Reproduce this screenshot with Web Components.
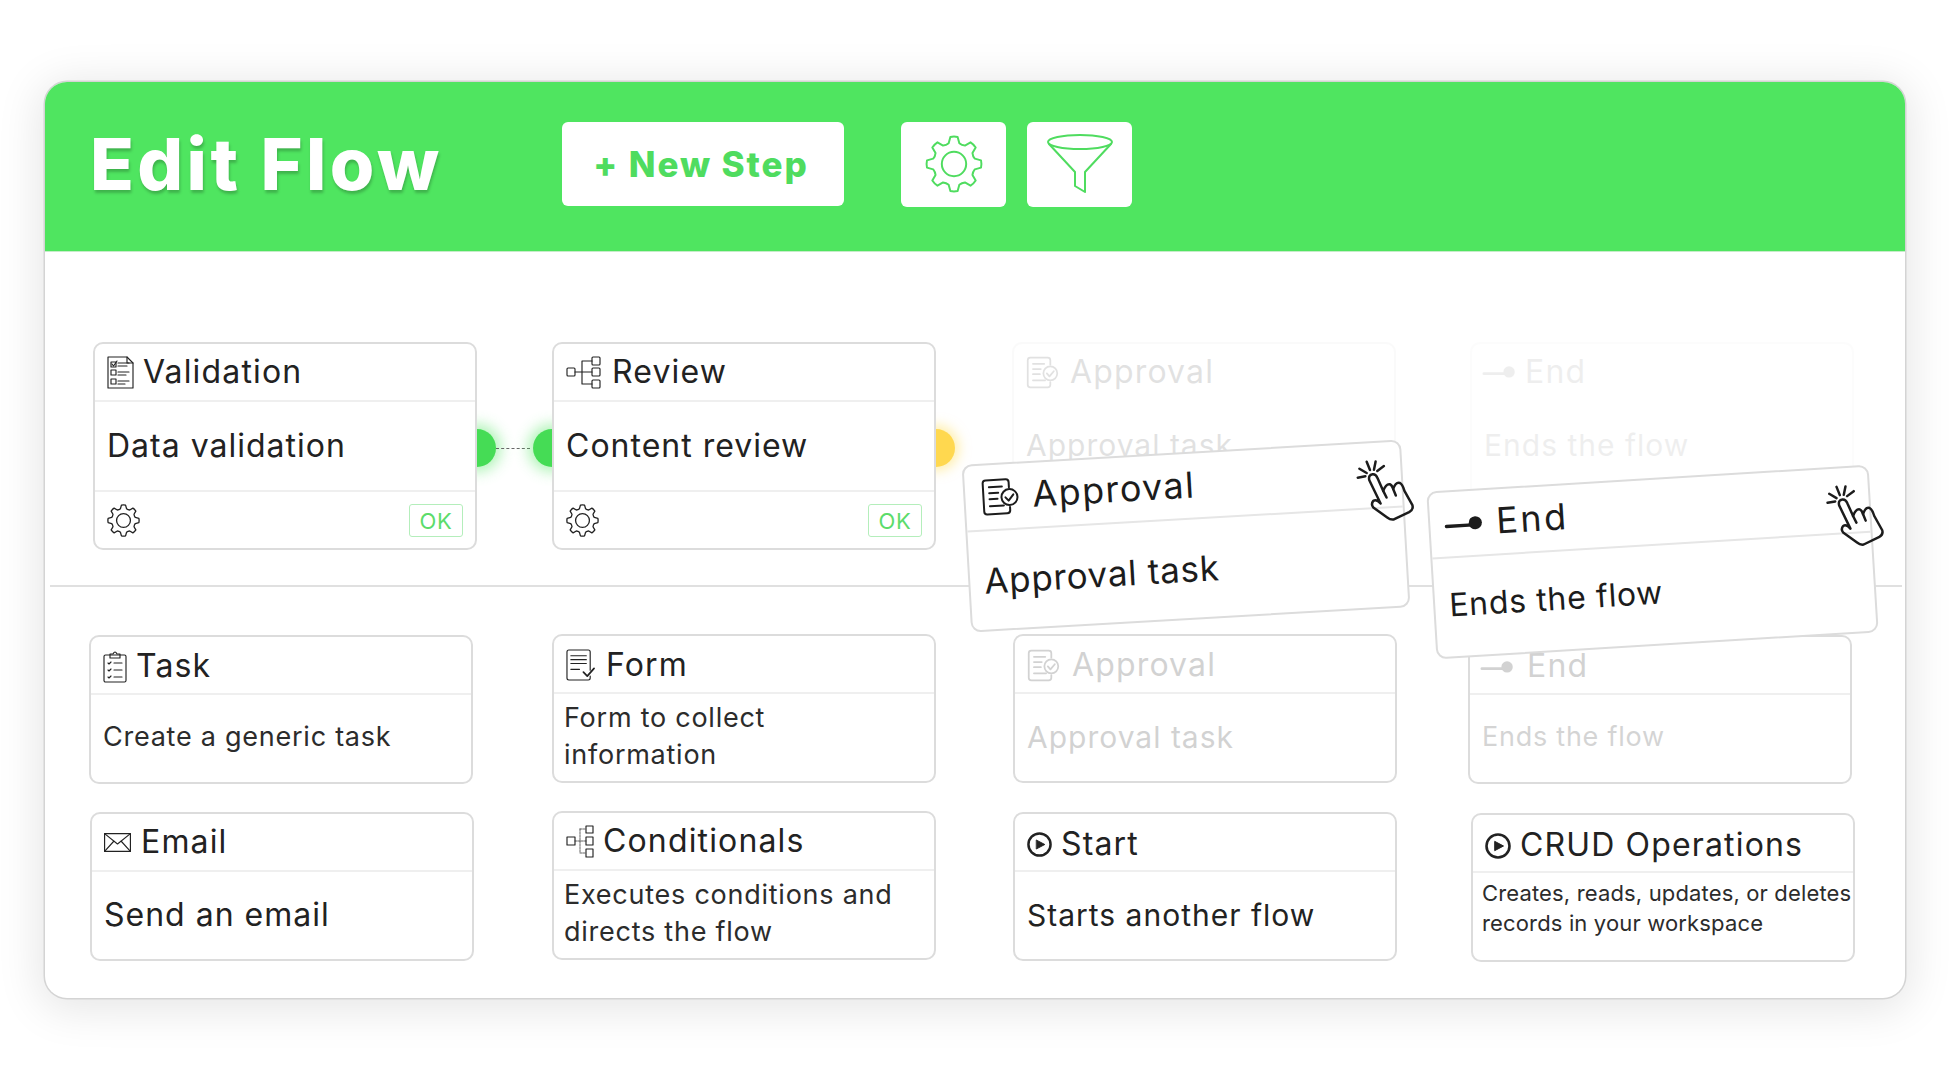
<!DOCTYPE html>
<html>
<head>
<meta charset="utf-8">
<title>Edit Flow</title>
<style>
html,body{margin:0;padding:0;background:#fff;}
body{font-family:Inter,"Liberation Sans",sans-serif;color:#222;width:1950px;height:1080px;overflow:hidden;}
</style>
</head>
<body>
<flow-window>
    <flow-header slot="header">
        <span slot="title">Edit Flow</span>
        <flow-button>+ New Step</flow-button>
        <flow-icon-button slot="tools"><flow-icon name="gear" width="58" weight="3.4"></flow-icon></flow-icon-button>
        <flow-icon-button slot="tools" style="margin-left:21px"><flow-icon name="funnel" width="68" weight="2"></flow-icon></flow-icon-button>
    </flow-header>

    <flow-row style="--left:48px;--cols:459px 460px 458px 384px">
        <flow-card tall>
            <flow-icon slot="icon" name="checklist" width="27"></flow-icon>
            <span slot="title">Validation</span>
            Data validation
            <flow-port slot="port" side="right" line></flow-port>
            <flow-icon slot="footer" name="gear" width="33" weight="4"></flow-icon>
            <flow-badge slot="footer">OK</flow-badge>
        </flow-card>
        <flow-card tall>
            <flow-icon slot="icon" name="branch" width="35"></flow-icon>
            <span slot="title" style="margin-left:2px">Review</span>
            Content review
            <flow-port slot="port" side="left"></flow-port>
            <flow-port slot="port" side="right" color="yellow"></flow-port>
            <flow-icon slot="footer" name="gear" width="33" weight="4"></flow-icon>
            <flow-badge slot="footer">OK</flow-badge>
        </flow-card>
        <flow-card tall faded size="m" style="opacity:.13">
            <flow-icon slot="icon" name="approval" width="33"></flow-icon>
            <span slot="title" style="margin-left:2px">Approval</span>
            Approval task
        </flow-card>
        <flow-card tall faded size="m" style="opacity:.07">
            <flow-icon slot="icon" name="end" width="32"></flow-icon>
            <span slot="title">End</span>
            Ends the flow
        </flow-card>
    </flow-row>

    <flow-divider></flow-divider>

    <flow-row style="--left:44px;--cols:463px 461px 455px 384px;--top:47px;--title-shift:2px">
        <flow-card size="s" style="margin-top:1px;--body-left:12px">
            <flow-icon slot="icon" name="clipboard" width="24"></flow-icon>
            <span slot="title">Task</span>
            Create a generic task
        </flow-card>
        <flow-card size="s">
            <flow-icon slot="icon" name="form" width="30"></flow-icon>
            <span slot="title" style="margin-left:1px">Form</span>
            Form to collect<br>information
        </flow-card>
        <flow-card size="m" ghost>
            <flow-icon slot="icon" name="approval" width="33"></flow-icon>
            <span slot="title" style="margin-left:3px">Approval</span>
            Approval task
        </flow-card>
        <flow-card size="s" ghost style="margin-top:1px;--title-shift:3px;--body-left:12px">
            <flow-icon slot="icon" name="end" width="32"></flow-icon>
            <span slot="title" style="margin-left:4px">End</span>
            Ends the flow
        </flow-card>
    </flow-row>

    <flow-row style="--left:45px;--cols:462px 461px 458px 384px;--top:27px">
        <flow-card style="margin-top:1px">
            <flow-icon slot="icon" name="mail" width="27"></flow-icon>
            <span slot="title" style="margin-left:1px">Email</span>
            Send an email
        </flow-card>
        <flow-card size="s">
            <flow-icon slot="icon" name="conditional" width="28"></flow-icon>
            <span slot="title">Conditionals</span>
            Executes conditions and<br>directs the flow
        </flow-card>
        <flow-card size="m" style="margin-top:1px;--title-shift:5px">
            <flow-icon slot="icon" name="play" width="25"></flow-icon>
            <span slot="title">Start</span>
            Starts another flow
        </flow-card>
        <flow-card size="xs" style="margin-top:2px;--title-shift:5px">
            <flow-icon slot="icon" name="play" width="26"></flow-icon>
            <span slot="title">CRUD Operations</span>
            Creates, reads, updates, or deletes<br>records in your workspace
        </flow-card>
    </flow-row>

    <flow-drag slot="float" style="left:921px;top:201px;width:440px;--tilt:-3.3deg;--body:35px;--hand:-13px">
        <flow-icon slot="icon" name="approval" width="38"></flow-icon>
        <span slot="title" style="letter-spacing:1.4px">Approval</span>
        Approval task
    </flow-drag>
    <flow-drag slot="float" style="left:1386px;top:227px;width:443px;--tilt:-3.5deg;--body:32px;--hand:-15px">
        <flow-icon slot="icon" name="end" width="37"></flow-icon>
        <span slot="title" style="letter-spacing:2.5px">End</span>
        Ends the flow
    </flow-drag>
</flow-window>

<script>
function gearPath(n){
    const R = 47, r = 37, c = 50;
    const pt = (rad, deg) => {
        const a = (deg - 90) * Math.PI / 180;
        return (c + rad * Math.cos(a)).toFixed(2) + " " + (c + rad * Math.sin(a)).toFixed(2);
    };
    const step = 360 / n;
    let d = "M" + pt(r, -step * .32);
    for(let i = 0; i < n; i++){
        const a = i * step;
        d += " L" + pt(R, a - step * .17);
        d += " Q" + pt(R + 1, a) + " " + pt(R, a + step * .17);
        d += " L" + pt(r, a + step * .32);
        d += " Q" + pt(r - 2, a + step * .5) + " " + pt(r, a + step * .68);
    }
    return d + "Z";
}

const ICONS = {
    gear: {w:100, h:100, svg:() => `<path d="${gearPath(8)}"/><circle cx="50" cy="50" r="21"/>`},
    funnel: {w:68, h:62, svg:() => `<ellipse cx="34" cy="9" rx="32" ry="7"/><path d="M3 11 L29 39 V53 L39 59 V39 L65 11"/>`},
    checklist: {w:27, h:33, svg:() => `<path d="M1 1H20L26 7V32H1Z"/><path d="M20 1V7H26"/><rect x="4" y="6" width="5" height="5"/><rect x="4" y="14" width="5" height="5"/><rect x="4" y="23" width="5" height="5"/><path d="M5 8l1.5 2L10 5M11 7H22M11 10H20M11 16H22M11 19H19M11 25H22M11 28H18"/>`},
    branch: {w:35, h:33, svg:() => `<rect x="1" y="12" width="8" height="8" rx="1"/><rect x="26" y="1" width="8" height="8" rx="1"/><rect x="26" y="12" width="8" height="8" rx="1"/><rect x="26" y="24" width="8" height="8" rx="1"/><path d="M9 16H26M16 5V28M16 5H26M16 28H26"/>`},
    conditional: {w:28, h:33, svg:() => `<rect x="1" y="12" width="8" height="8"/><rect x="20" y="1" width="7" height="7"/><rect x="20" y="12" width="7" height="8"/><rect x="20" y="24" width="7" height="8"/><path stroke-width=".7" stroke-dasharray="2 1" d="M9 16H20M14 4V28M14 4H20M14 28H20"/>`},
    approval: {w:38, h:38, svg:() => `<path stroke-width="2" d="M28 10V5Q28 2 25 2H5Q2 2 2 5V33Q2 36 5 36H25Q28 36 28 33V30"/><path stroke-width="2" d="M8 9H21M8 15H17M8 21H16M8 28H22"/><circle stroke-width="2" cx="28" cy="20" r="8"/><path stroke-width="2" d="M24 20l3 3.5 5-6"/>`},
    clipboard: {w:24, h:33, svg:() => `<rect x="1" y="5" width="22" height="27" rx="1.5"/><path d="M7 8V4H10Q12 0 14 4H17V8Z"/><path d="M5 13l1 1 2-2M5 20l1 1 2-2M5 27l1 1 2-2M11 13H19M11 20H19M11 27H19"/>`},
    form: {w:31, h:33, svg:() => `<path d="M25 22V3Q25 1 23 1H3Q1 1 1 3V30Q1 32 3 32H23Q25 32 25 30V28"/><path d="M5 7H21M5 11H21M5 15H21M5 21H14"/><path stroke-width="1.8" d="M18 24l4 4 7-8"/>`},
    mail: {w:27, h:19, svg:() => `<rect x=".6" y=".6" width="25.8" height="17.8"/><path d="M.6 .6L13.5 11 26.4 .6M.6 18.4L10 8M26.4 18.4L17 8"/>`},
    play: {w:26, h:26, svg:() => `<circle stroke-width="2.6" cx="13" cy="13" r="11.5"/><path fill="currentColor" stroke-width="1" d="M10 8.5L18.5 13 10 17.5Z"/>`},
    end: {w:37, h:16, svg:() => `<path stroke-width="3.4" d="M0 10H26"/><circle fill="currentColor" stroke="none" cx="29" cy="8" r="6.6"/>`},
    hand: {w:175, h:183, svg:() => `<g transform="translate(-78 -30)"><path d="M150 160L116 90Q112 74 126 72Q136 71 141 84L158 122Q166 100 178 102Q184 104 188 116Q196 94 208 98Q216 102 222 122L246 165Q250 178 236 186L190 208Q180 210 170 202L128 172Q120 162 128 152Q138 146 150 160Z"/><path d="M158 122L168 142M188 116L196 136M81 82L104 78M86 55L108 68M108 34L118 59M135 33L130 58M160 47L140 62"/></g>`}
};

class FlowIcon extends HTMLElement{
    constructor(){
        super();
        this.attachShadow({mode: 'open'});
    }
    connectedCallback(){
        const icon = ICONS[this.getAttribute("name")];
        const width = Number(this.getAttribute("width")) || icon.w;
        const height = width * icon.h / icon.w;
        const weight = this.getAttribute("weight") || (icon.w / width * 1.15).toFixed(2);
        this.shadowRoot.innerHTML = `
        <style>
        :host{display:inline-flex;flex:none;line-height:0;}
        svg{overflow:visible;fill:none;stroke:currentColor;stroke-linejoin:round;stroke-linecap:round;}
        </style>
        <svg width="${width}" height="${height}" viewBox="0 0 ${icon.w} ${icon.h}" stroke-width="${weight}">${icon.svg()}</svg>
        `;
    }
}
customElements.define("flow-icon", FlowIcon);

class FlowWindow extends HTMLElement{
    constructor(){
        super();
        this.attachShadow({mode: 'open'});
        this.shadowRoot.innerHTML = `
        <style>
        :host{
            display:block;
            position:relative;
            box-sizing:border-box;
            width:1860px;
            height:916px;
            margin:82px 0 0 45px;
            background:#fff;
            border-radius:22px;
            box-shadow:0 0 0 1.5px #d4d4d4,0 6px 44px 6px rgba(0,0,0,.1);
        }
        main{position:relative;padding-top:91px;}
        </style>
        <slot name="header"></slot>
        <main>
            <slot></slot>
            <slot name="float"></slot>
        </main>
        `;
    }
}
customElements.define("flow-window", FlowWindow);

class FlowHeader extends HTMLElement{
    constructor(){
        super();
        this.attachShadow({mode: 'open'});
        this.shadowRoot.innerHTML = `
        <style>
        :host{
            display:flex;
            align-items:center;
            box-sizing:border-box;
            height:169px;
            padding:0 0 5px 45px;
            background:#4fe560;
            border-radius:22px 22px 0 0;
            box-shadow:0 1px 0 #c6ecc9;
        }
        .title{
            flex:0 0 472px;
            color:#fff;
            font-size:72px;
            font-weight:800;
            letter-spacing:3.4px;
            line-height:1;
            white-space:nowrap;
            text-shadow:1px 3px 3px rgba(0,0,0,.22);
        }
        .tools{display:flex;margin-left:57px;}
        </style>
        <div class="title"><slot name="title"></slot></div>
        <slot></slot>
        <div class="tools"><slot name="tools"></slot></div>
        `;
    }
}
customElements.define("flow-header", FlowHeader);

class FlowButton extends HTMLElement{
    constructor(){
        super();
        this.attachShadow({mode: 'open'});
        this.shadowRoot.innerHTML = `
        <style>
        :host{
            display:flex;
            align-items:center;
            justify-content:center;
            box-sizing:border-box;
            width:282px;
            height:84px;
            padding-right:4px;
            background:#fff;
            color:#4fdc5f;
            border-radius:6px;
            font-size:35px;
            font-weight:800;
            letter-spacing:1.9px;
        }
        </style>
        <slot></slot>
        `;
    }
}
customElements.define("flow-button", FlowButton);

class FlowIconButton extends HTMLElement{
    constructor(){
        super();
        this.attachShadow({mode: 'open'});
        this.shadowRoot.innerHTML = `
        <style>
        :host{
            display:flex;
            align-items:center;
            justify-content:center;
            width:105px;
            height:85px;
            background:#fff;
            color:#4fdc5f;
            border-radius:6px;
        }
        </style>
        <slot></slot>
        `;
    }
}
customElements.define("flow-icon-button", FlowIconButton);

class FlowRow extends HTMLElement{
    constructor(){
        super();
        this.attachShadow({mode: 'open'});
        this.shadowRoot.innerHTML = `
        <style>
        :host{
            display:grid;
            grid-template-columns:var(--cols);
            align-items:start;
            padding-left:var(--left);
            margin-top:var(--top,0);
        }
        </style>
        <slot></slot>
        `;
    }
}
customElements.define("flow-row", FlowRow);

class FlowDivider extends HTMLElement{
    constructor(){
        super();
        this.attachShadow({mode: 'open'});
        this.shadowRoot.innerHTML = `
        <style>
        :host{display:block;height:2px;margin:35px 3px 0 5px;background:#e0e0e0;}
        </style>
        `;
    }
}
customElements.define("flow-divider", FlowDivider);

class FlowCard extends HTMLElement{
    constructor(){
        super();
        this.attachShadow({mode: 'open'});
        this.shadowRoot.innerHTML = `
        <style>
        :host{
            display:block;
            position:relative;
            width:384px;
            height:149px;
            font-size:32px;
            letter-spacing:1px;
            color:#222;
        }
        :host([tall]){height:208px;}
        .box{
            position:relative;
            z-index:1;
            display:flex;
            flex-direction:column;
            box-sizing:border-box;
            height:100%;
            background:#fff;
            border:2px solid #dcdcdc;
            border-radius:10px;
            overflow:hidden;
        }
        .head{
            flex:0 0 58px;
            box-sizing:border-box;
            display:flex;
            align-items:center;
            gap:9px;
            padding:var(--title-shift,0) 12px 0;
            border-bottom:2px solid #efefef;
            line-height:1.2;
            letter-spacing:1.15px;
        }
        .body{
            flex:1;
            display:flex;
            align-items:center;
            padding:0 10px 0 12px;
            line-height:1.2;
            white-space:nowrap;
        }
        .foot{
            display:none;
            flex:0 0 58px;
            box-sizing:border-box;
            align-items:center;
            justify-content:space-between;
            padding:1px 12px 0 12px;
            border-top:2px solid #efefef;
        }
        :host([tall]) .foot{display:flex;}
        :host([faded]) .foot,:host([faded]) .head{border-color:transparent;}
        :host([size=m]) .body{font-size:30px;padding-bottom:2px;}
        :host([size=s]) .body{font-size:27px;line-height:37.5px;color:#2c2c2c;padding:0 8px 3px var(--body-left,10px);letter-spacing:.75px;}
        :host([size=xs]) .body{font-size:22px;line-height:30px;color:#2c2c2c;align-items:flex-start;padding:5px 0 0 9px;letter-spacing:.15px;}
        :host([ghost]) ::slotted([slot=icon]),:host([ghost]) ::slotted([slot=title]),:host([ghost]) .body > *{opacity:.2;}
        </style>
        <slot name="port"></slot>
        <div class="box">
            <div class="head"><slot name="icon"></slot><slot name="title"></slot></div>
            <div class="body"><div><slot></slot></div></div>
            <div class="foot"><slot name="footer"></slot></div>
        </div>
        `;
    }
}
customElements.define("flow-card", FlowCard);

class FlowPort extends HTMLElement{
    constructor(){
        super();
        this.attachShadow({mode: 'open'});
        this.shadowRoot.innerHTML = `
        <style>
        :host{
            position:absolute;
            top:87px;
            width:38px;
            height:38px;
            border-radius:50%;
            background:#45dc55;
            box-shadow:0 0 14px 5px rgba(79,229,96,.45);
        }
        :host([side=right]){right:-19px;}
        :host([side=left]){left:-19px;}
        :host([color=yellow]){background:#ffd84f;box-shadow:0 0 12px 4px rgba(255,224,90,.5);}
        .line{
            display:none;
            position:absolute;
            left:100%;
            top:19px;
            width:34px;
            border-top:1.5px dashed #666;
        }
        :host([line]) .line{display:block;}
        </style>
        <div class="line"></div>
        `;
    }
}
customElements.define("flow-port", FlowPort);

class FlowBadge extends HTMLElement{
    constructor(){
        super();
        this.attachShadow({mode: 'open'});
        this.shadowRoot.innerHTML = `
        <style>
        :host{
            display:flex;
            align-items:center;
            justify-content:center;
            box-sizing:border-box;
            width:54px;
            height:33px;
            border:1.5px solid #b4eebb;
            border-radius:3px;
            color:#5cdc6b;
            font-size:22px;
            letter-spacing:.8px;
        }
        </style>
        <slot></slot>
        `;
    }
}
customElements.define("flow-badge", FlowBadge);

class FlowDrag extends HTMLElement{
    constructor(){
        super();
        this.attachShadow({mode: 'open'});
        this.shadowRoot.innerHTML = `
        <style>
        :host{
            display:block;
            position:absolute;
            z-index:5;
            box-sizing:border-box;
            height:168px;
            background:#fff;
            border:2px solid #dcdcdc;
            border-radius:10px;
            transform:rotate(var(--tilt));
            font-size:36px;
            letter-spacing:.7px;
            color:#1c1c1c;
        }
        .head{
            display:flex;
            align-items:center;
            gap:13px;
            box-sizing:border-box;
            height:66px;
            padding:0 16px;
            border-bottom:2px solid #e6e6e6;
            line-height:1.2;
        }
        .body{padding:28px 0 0 14px;line-height:1.2;white-space:nowrap;font-size:var(--body);}
        .hand{position:absolute;right:var(--hand);top:18px;transform:rotate(calc(var(--tilt) * -1));line-height:0;}
        </style>
        <div class="head"><slot name="icon"></slot><slot name="title"></slot></div>
        <div class="body"><slot></slot></div>
        <div class="hand"><flow-icon name="hand" width="58" weight="7.5"></flow-icon></div>
        `;
    }
}
customElements.define("flow-drag", FlowDrag);
</script>
</body>
</html>
